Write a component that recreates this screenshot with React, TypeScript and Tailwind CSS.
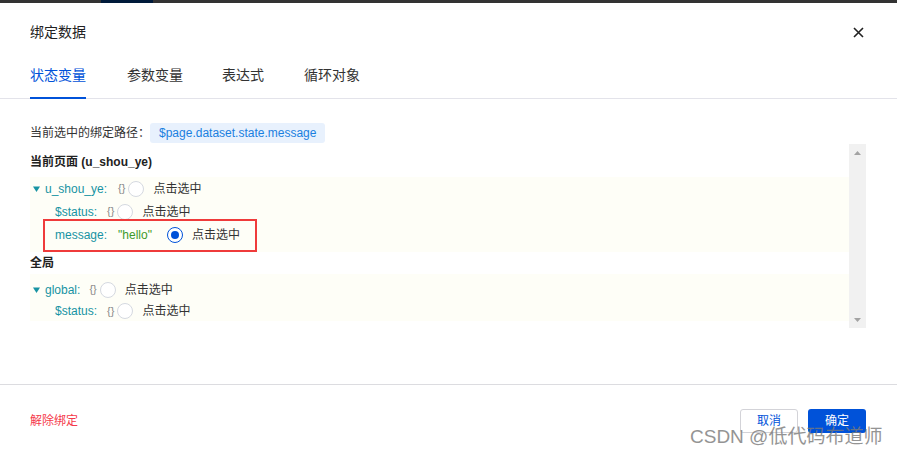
import React from "react";

const font = { fontFamily: '"Liberation Sans", Arial, "Noto Sans CJK SC", sans-serif' };

function Radio({ checked = false }: { checked?: boolean }) {
  return checked ? (
    <span className="w-[16px] h-[16px] rounded-full border-[1.5px] border-[#0052d9] bg-white flex items-center justify-center shrink-0">
      <span className="w-[8px] h-[8px] rounded-full bg-[#0052d9]" />
    </span>
  ) : (
    <span className="w-[16px] h-[16px] rounded-full border border-[#d5d9e0] bg-white shrink-0" />
  );
}

function Caret() {
  return (
    <svg width="7" height="6" viewBox="0 0 7 6" className="shrink-0">
      <path d="M0 0.5 L7 0.5 L3.5 6 Z" fill="#1793a3" />
    </svg>
  );
}

function Row({
  caret,
  k,
  value,
  checked,
  indent,
  h = "h-[23px]",
}: {
  caret?: boolean;
  k: string;
  value: React.ReactNode;
  checked?: boolean;
  indent?: boolean;
  h?: string;
}) {
  return (
    <div className={`flex items-center ${h} ${indent ? "pl-[25px]" : "pl-[3px]"}`}>
      {caret && (
        <span className="w-[12px] flex items-center">
          <Caret />
        </span>
      )}
      <span className="text-[#1793a3] text-[12px]">{k}</span>
      {value}
      <Radio checked={checked} />
      <span className="ml-[9px] text-[12px] text-[#333]">点击选中</span>
    </div>
  );
}

const Obj = ({ ml = "ml-[11px]" }: { ml?: string }) => (
  <span className={`${ml} mr-[3px] text-[11px] text-[#888]`}>{"{}"}</span>
);

export default function App() {
  return (
    <div className="w-[897px] h-[456px] bg-white relative overflow-hidden" style={font}>
      <div className="h-[3px] bg-[#333] flex">
        <div className="ml-[101px] w-[52px] h-full bg-[#001a3a]" />
      </div>

      <div className="flex items-center justify-between px-[30px] pt-[19px]">
        <span className="text-[14px] leading-[20px] text-[#222]">绑定数据</span>
        <svg width="11" height="11" viewBox="0 0 11 11" className="mr-[3px]">
          <path d="M1 1 L10 10 M10 1 L1 10" stroke="#222" strokeWidth="1.6" />
        </svg>
      </div>

      <div className="mt-[23px] border-b border-[#e3e3ea] px-[30px] flex">
        <div className="-mb-px border-b-2 border-[#0052d9] pb-[12px] text-[14px] leading-[20px] text-[#0052d9]">
          状态变量
        </div>
        <div className="ml-[41px] pb-[12px] text-[14px] leading-[20px] text-[#333]">参数变量</div>
        <div className="ml-[39px] pb-[12px] text-[14px] leading-[20px] text-[#333]">表达式</div>
        <div className="ml-[40px] pb-[12px] text-[14px] leading-[20px] text-[#333]">循环对象</div>
      </div>

      <div className="px-[30px] pt-[24px] flex items-center">
        <span className="text-[12px] text-[#333] leading-[20px]">当前选中的绑定路径：</span>
        <span className="h-[20px] leading-[20px] px-[9px] rounded-[3px] bg-[#e8f1fd] text-[12px] text-[#1a7fe0]">
          $page.dataset.state.message
        </span>
      </div>

      <div className="ml-[30px] mr-[31px] mt-[1px] h-[184px] flex">
        <div className="flex-1 relative">
          <div className="mt-[8px] text-[12px] leading-[20px] font-bold text-[#222]">当前页面 (u_shou_ye)</div>
          <div className="mt-[5px] bg-[#fefef7] pb-[6px]">
            <Row caret k="u_shou_ye:" value={<Obj />} />
            <Row indent k="$status:" value={<Obj ml="ml-[10px]" />} />
            <Row
              indent
              k="message:"
              checked
              value={<span className="ml-[11px] mr-[15px] text-[12px] text-[#3d9a29]">"hello"</span>}
            />
          </div>
          <div className="mt-[1px] text-[12px] leading-[20px] font-bold text-[#222]">全局</div>
          <div className="mt-[1px] bg-[#fefef7] pt-[4px]">
            <Row caret k="global:" value={<Obj ml="ml-[9px]" />} />
            <Row indent k="$status:" value={<Obj ml="ml-[10px]" />} h="h-[20px]" />
          </div>
          <div className="absolute left-[13px] top-[75px] w-[214px] h-[33px] border-2 border-[#ef3b3b]" />
        </div>
        <div className="w-[17px] bg-[#f1f1f1] flex flex-col justify-between">
          <div className="h-[17px] flex items-center justify-center">
            <svg width="7" height="4" viewBox="0 0 7 4">
              <path d="M0 4 L7 4 L3.5 0 Z" fill="#a3a3a3" />
            </svg>
          </div>
          <div className="h-[17px] flex items-center justify-center">
            <svg width="7" height="4" viewBox="0 0 7 4">
              <path d="M0 0 L7 0 L3.5 4 Z" fill="#a3a3a3" />
            </svg>
          </div>
        </div>
      </div>

      <div className="mt-[56px] border-t border-[#dcdce0] px-[30px] pt-[24px] pr-[31px] flex items-center justify-between">
        <span className="text-[12px] text-[#f5394a]">解除绑定</span>
        <div className="flex items-center">
          <button className="w-[58px] h-[24px] rounded-[3px] border border-[#d3d3d8] bg-white text-[12px] text-[#0052d9]">
            取消
          </button>
          <button className="ml-[10px] w-[58px] h-[24px] rounded-[3px] bg-[#0052d9] text-[12px] text-white">
            确定
          </button>
        </div>
      </div>

      <div className="absolute left-[690px] top-[425px] text-[19px] leading-[24px] text-[#7a7a7a] opacity-80 whitespace-nowrap">
        CSDN @低代码布道师
      </div>
    </div>
  );
}
